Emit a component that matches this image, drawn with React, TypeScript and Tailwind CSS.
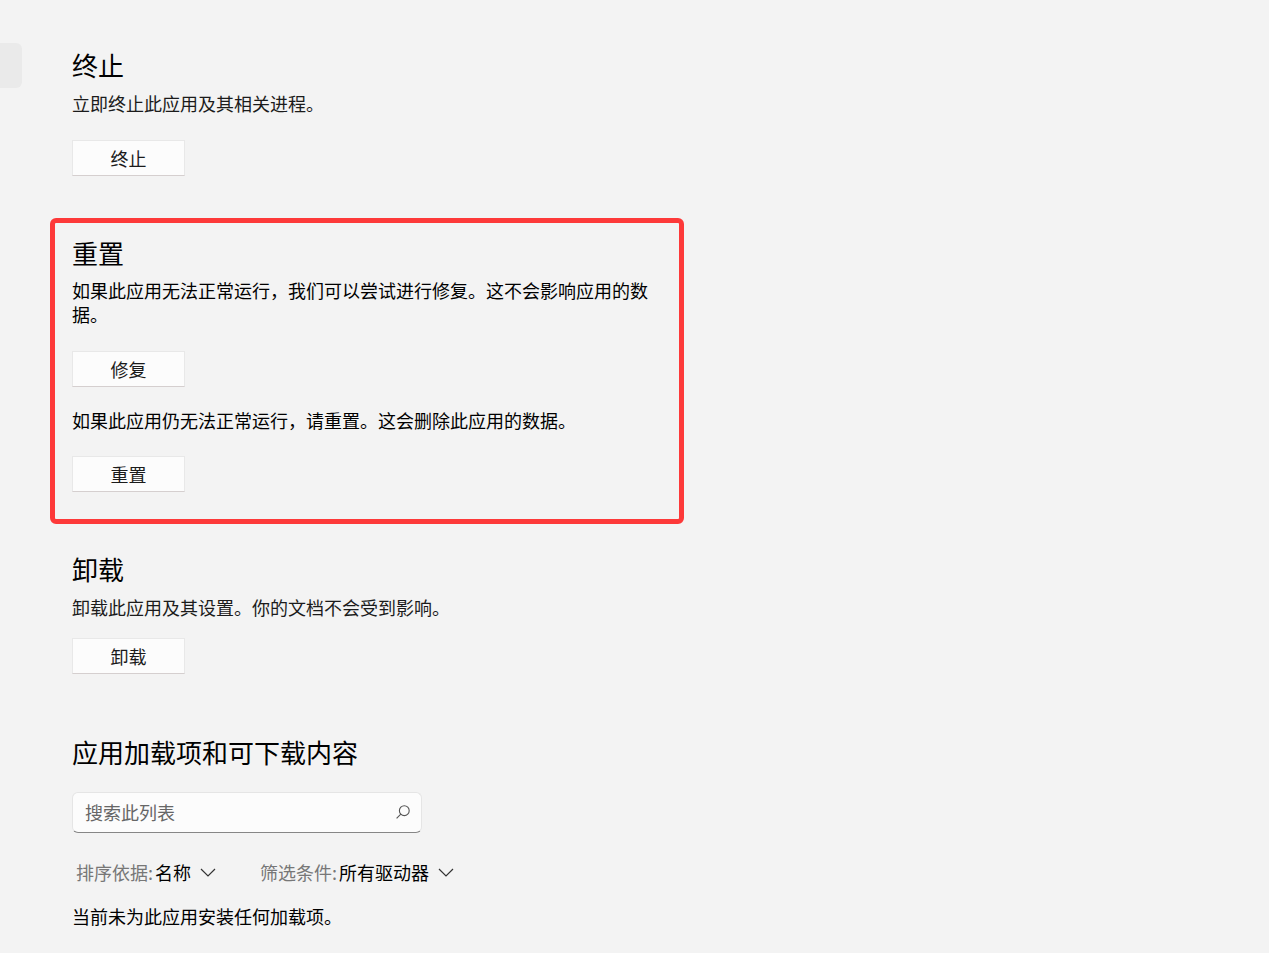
import type { ReactNode } from "react";

function Heading({ children }: { children: ReactNode }) {
  return <h2 className="text-[26px] leading-8 text-black">{children}</h2>;
}

function ActionButton({ children }: { children: ReactNode }) {
  return (
    <button
      type="button"
      className="block h-9 w-[113px] border border-[#e8e8e8] border-b-[#d5cfcf] bg-[#fcfcfc] text-[#1b1b1b]"
    >
      {children}
    </button>
  );
}

function Chevron() {
  return (
    <svg
      viewBox="0 0 16 9"
      className="pointer-events-none absolute right-0 top-2 h-[9px] w-4"
      fill="none"
      stroke="#333"
      strokeWidth="1.2"
      aria-hidden="true"
    >
      <path d="M1 1l7 7 7-7" />
    </svg>
  );
}

type PickerProps = { id: string; label: string; value: string };

function Picker({ id, label, value }: PickerProps) {
  return (
    <div className="flex items-center gap-0.5">
      <label htmlFor={id} className="text-[#777]">
        {label}
      </label>
      <div className="relative">
        <select
          id={id}
          className="block h-6 appearance-none bg-transparent pr-[25px] leading-6 text-black [field-sizing:content]"
        >
          <option>{value}</option>
        </select>
        <Chevron />
      </div>
    </div>
  );
}

export default function App() {
  return (
    <div className="flex min-h-screen gap-7 bg-[#f3f3f3] font-['Noto_Sans_CJK_SC',sans-serif] text-lg leading-6 text-black">
      <aside className="w-[22px] shrink-0 pt-[43px]">
        <div className="h-[45px] rounded-r-md bg-[#eaeaea]" />
      </aside>

      <main className="w-full max-w-[634px] pb-6 pt-[49px]">
        <section className="px-[22px]">
          <Heading>终止</Heading>
          <p className="mb-[25px] mt-[10px] text-[#1b1b1b]">立即终止此应用及其相关进程。</p>
          <ActionButton>终止</ActionButton>
        </section>

        <section className="mt-[42px] rounded-md border-[5px] border-[#fd3939] px-[17px] pb-[27px] pt-[14px]">
          <Heading>重置</Heading>
          <p className="mb-[25px] mt-[9px]">
            如果此应用无法正常运行，我们可以尝试进行修复。这不会影响应用的数据。
          </p>
          <ActionButton>修复</ActionButton>
          <p className="mb-6 mt-[21px]">如果此应用仍无法正常运行，请重置。这会删除此应用的数据。</p>
          <ActionButton>重置</ActionButton>
        </section>

        <section className="mt-[29px] px-[22px]">
          <Heading>卸载</Heading>
          <p className="mb-[19px] mt-[10px] text-[#1b1b1b]">卸载此应用及其设置。你的文档不会受到影响。</p>
          <ActionButton>卸载</ActionButton>
        </section>

        <section className="mt-[62px] px-[22px]">
          <Heading>应用加载项和可下载内容</Heading>
          <div className="relative mt-6 max-w-[350px]">
            <input
              type="text"
              aria-label="搜索此列表"
              placeholder="搜索此列表"
              className="block h-[41px] w-full rounded-md border border-[#e5e5e5] border-b-[#868686] bg-[#fcfcfc] pb-0.5 pl-3 pr-10 placeholder:text-[#666]"
            />
            <svg
              viewBox="0 0 14 14"
              className="pointer-events-none absolute right-3 top-[13px] size-[14px]"
              fill="none"
              stroke="#555"
              strokeWidth="1.1"
              aria-hidden="true"
            >
              <circle cx="8.3" cy="5.7" r="4.9" />
              <path d="M4.8 9.2L.6 13.4" />
            </svg>
          </div>
          <div className="mt-[27px] flex gap-11 pl-1">
            <Picker id="sort" label="排序依据:" value="名称" />
            <Picker id="filter" label="筛选条件:" value="所有驱动器" />
          </div>
          <p className="mt-5">当前未为此应用安装任何加载项。</p>
        </section>
      </main>
    </div>
  );
}
